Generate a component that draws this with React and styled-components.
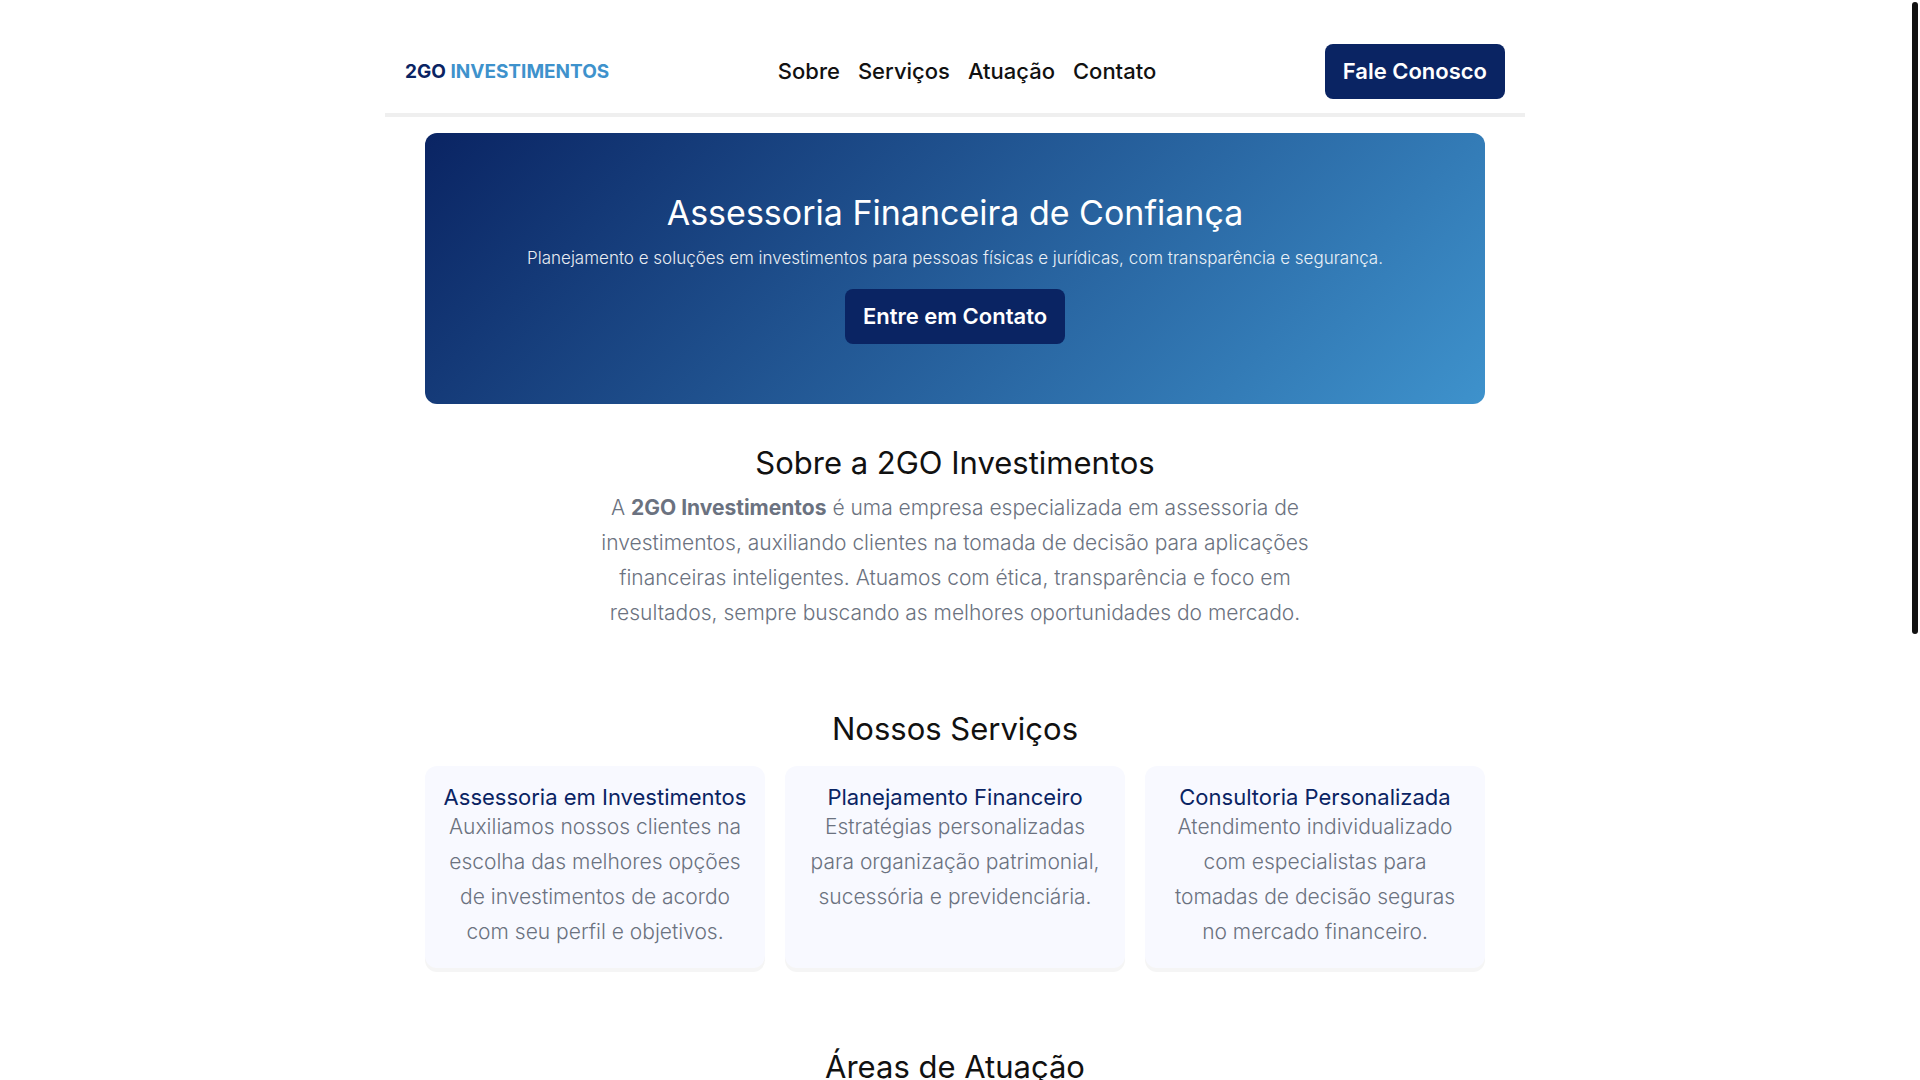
import React from 'react'
import styled, { createGlobalStyle } from 'styled-components'

// styles starts here ....

const GlobalStyle = createGlobalStyle`
  * {
    box-sizing: border-box;
    margin: 0;
    padding: 0;
  }
  html {
    scrollbar-width: none;
  }
  body {
    background: #fff;
    color: #111;
    font-family: Inter, 'Open Sans', sans-serif;
    font-size: 21px;
    font-weight: 300;
    line-height: 35px;
  }
`
const Wrapper = styled.div`
  padding-right: 10px;
`
const Container = styled.div`
  max-width: 1140px;
  margin: 0 auto;
`
const Header = styled.header`
  display: flex;
  align-items: center;
  justify-content: space-between;
  padding: 44px 20px 14px;
  box-shadow: 0 4px #efefef;
`
const Logo = styled.a`
  color: #0a2463;
  font-size: 19px;
  font-weight: 700;
  text-decoration: none;

  span {
    color: #3e92cc;
  }
`
const Nav = styled.nav`
  display: flex;
  gap: 18px;
`
const NavLink = styled.a`
  color: #111;
  font-size: 22px;
  font-weight: 500;
  text-decoration: none;
`
const Button = styled.button`
  padding: 10px 18px;
  border: none;
  border-radius: 8px;
  background: #0a2463;
  color: #fff;
  font: inherit;
  font-size: 22px;
  font-weight: 600;
  cursor: pointer;
`
const Main = styled.main`
  padding: 20px 40px;
`
const Hero = styled.section`
  display: flex;
  flex-direction: column;
  align-items: center;
  padding: 60px 20px;
  border-radius: 12px;
  background: linear-gradient(135deg, #0a2463, #3e92cc);
  color: #fff;
  text-align: center;
`
const HeroTitle = styled.h1`
  margin-bottom: 11px;
  font-size: 34px;
  font-weight: 400;
  line-height: 40px;
`
const HeroText = styled.p`
  margin-bottom: 16px;
  font-size: 17px;
  line-height: 29px;
  opacity: 0.9;
`
const Section = styled.section`
  padding: 41px 0 40px;
  text-align: center;
`
const Title = styled.h2`
  margin-bottom: 10px;
  font-size: 31px;
  font-weight: 400;
  line-height: 35px;
`
const Text = styled.p`
  max-width: 750px;
  margin: 0 auto;
  color: #6b7280;

  strong {
    font-weight: 700;
  }
`
const Cards = styled.div`
  display: grid;
  grid-template-columns: repeat(3, 1fr);
  gap: 20px;
  margin-top: 20px;
`
const Card = styled.article`
  padding: 19px 18px;
  border-radius: 12px;
  background: #f8f9ff;
  box-shadow: 0 4px #f5f5f5;
`
const CardTitle = styled.h3`
  color: #0a2463;
  font-size: 22px;
  font-weight: 400;
  line-height: 24px;
`
const ScrollThumb = styled.div`
  position: fixed;
  top: 2px;
  right: 2px;
  width: 6px;
  height: 58.5vh;
  border-radius: 3px;
  background: #111;
`

// styles end here......

const links = [
  { label: 'Sobre', href: '#sobre' },
  { label: 'Serviços', href: '#servicos' },
  { label: 'Atuação', href: '#atuacao' },
  { label: 'Contato', href: '#contato' },
]

const services = [
  {
    title: 'Assessoria em Investimentos',
    text: 'Auxiliamos nossos clientes na escolha das melhores opções de investimentos de acordo com seu perfil e objetivos.',
  },
  {
    title: 'Planejamento Financeiro',
    text: 'Estratégias personalizadas para organização patrimonial, sucessória e previdenciária.',
  },
  {
    title: 'Consultoria Personalizada',
    text: 'Atendimento individualizado com especialistas para tomadas de decisão seguras no mercado financeiro.',
  },
]

const App = () => {
  return (
    <Wrapper>
      <GlobalStyle />
      <Container>
        <Header>
          <Logo href="#">2GO <span>INVESTIMENTOS</span></Logo>
          <Nav>
            {links.map((link) => (
              <NavLink key={link.href} href={link.href}>{link.label}</NavLink>
            ))}
          </Nav>
          <Button>Fale Conosco</Button>
        </Header>

        <Main>
          <Hero>
            <HeroTitle>Assessoria Financeira de Confiança</HeroTitle>
            <HeroText>
              Planejamento e soluções em investimentos para pessoas físicas e jurídicas, com transparência e segurança.
            </HeroText>
            <Button>Entre em Contato</Button>
          </Hero>

          <Section id="sobre">
            <Title>Sobre a 2GO Investimentos</Title>
            <Text>
              A <strong>2GO Investimentos</strong> é uma empresa especializada em assessoria de investimentos,
              auxiliando clientes na tomada de decisão para aplicações financeiras inteligentes. Atuamos com
              ética, transparência e foco em resultados, sempre buscando as melhores oportunidades do mercado.
            </Text>
          </Section>

          <Section id="servicos">
            <Title>Nossos Serviços</Title>
            <Cards>
              {services.map((service) => (
                <Card key={service.title}>
                  <CardTitle>{service.title}</CardTitle>
                  <Text>{service.text}</Text>
                </Card>
              ))}
            </Cards>
          </Section>

          <Section id="atuacao">
            <Title>Áreas de Atuação</Title>
          </Section>
        </Main>
      </Container>
      <ScrollThumb />
    </Wrapper>
  )
}

export default App
